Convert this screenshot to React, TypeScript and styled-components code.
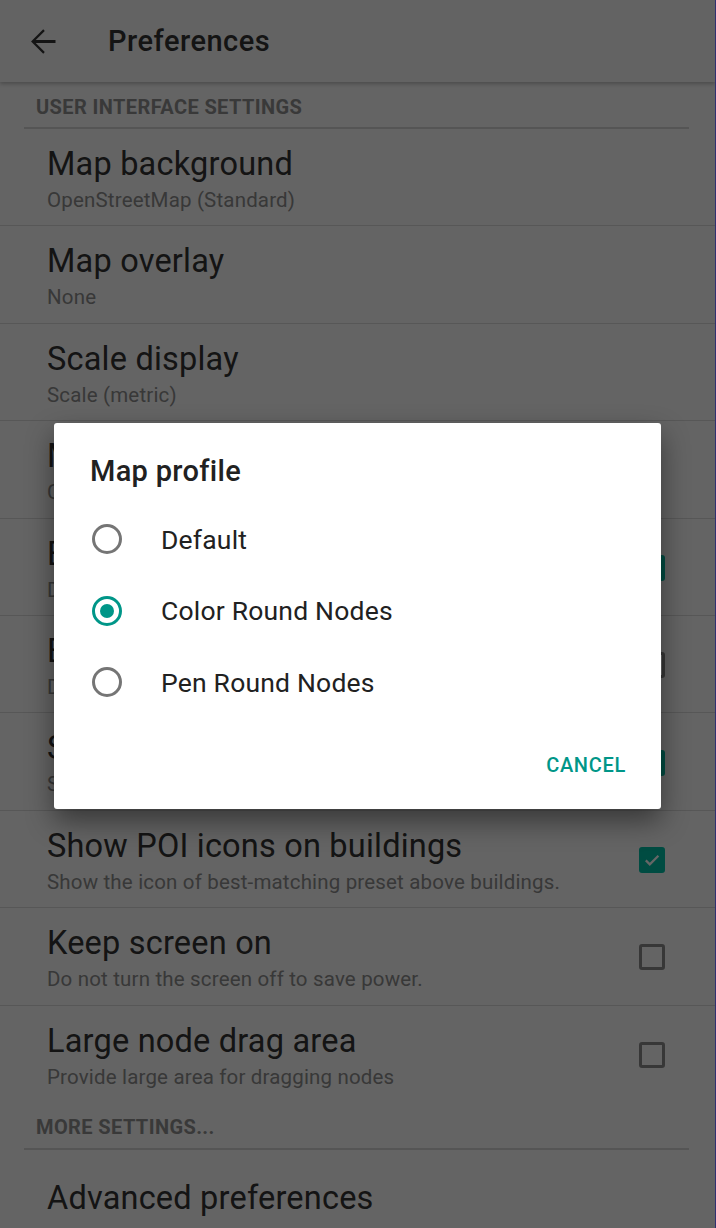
import styled, { createGlobalStyle } from "styled-components";

const GlobalStyle = createGlobalStyle`
  body {
    margin: 0;
    font-family: Roboto, "Noto Sans", "Liberation Sans", sans-serif;
  }
`;

type Pref = {
  title: string;
  summary?: string;
  checked?: boolean;
};

const UI_PREFS: Pref[] = [
  { title: "Map background", summary: "OpenStreetMap (Standard)" },
  { title: "Map overlay", summary: "None" },
  { title: "Scale display", summary: "Scale (metric)" },
  { title: "Map profile", summary: "Color Round Nodes" },
  { title: "Enable anti-aliasing", summary: "Draw smoother lines, may be slower", checked: true },
  { title: "Enable keep right", summary: "Display the keep right overlay", checked: false },
  { title: "Show tolerance", summary: "Show the area around ways and nodes that can be selected", checked: true },
  { title: "Show POI icons on buildings", summary: "Show the icon of best-matching preset above buildings.", checked: true },
  { title: "Keep screen on", summary: "Do not turn the screen off to save power.", checked: false },
  { title: "Large node drag area", summary: "Provide large area for dragging nodes", checked: false },
];

const PROFILES = ["Default", "Color Round Nodes", "Pen Round Nodes"];
const SELECTED_PROFILE = 1;

export default function App() {
  return (
    <>
      <GlobalStyle />
      <Page>
        <AppBar>
          <BackButton>
            <svg width="39" height="39" viewBox="0 0 24 24">
              <path d="M20 11.1H7.83l5.59-5.59L12.45 4.5 4.95 12l7.5 7.5.97-.97L7.83 12.9H20z" fill="#333" />
            </svg>
          </BackButton>
          <AppTitle>Preferences</AppTitle>
        </AppBar>

        <SectionHeader>
          <SectionLabel>User interface settings</SectionLabel>
        </SectionHeader>
        {UI_PREFS.map((pref, index) => (
          <PrefRow key={pref.title} $last={index === UI_PREFS.length - 1}>
            <PrefText>
              <PrefTitle>{pref.title}</PrefTitle>
              {pref.summary && <PrefSummary>{pref.summary}</PrefSummary>}
            </PrefText>
            {pref.checked !== undefined && (
              <Checkbox $checked={pref.checked}>
                {pref.checked && (
                  <svg width="20" height="20" viewBox="0 0 20 20">
                    <path d="M3.8 10.4l4 4 8.6-8.6" stroke="#fff" strokeWidth="2.2" fill="none" />
                  </svg>
                )}
              </Checkbox>
            )}
          </PrefRow>
        ))}

        <SectionHeader>
          <SectionLabel>More settings...</SectionLabel>
        </SectionHeader>
        <PrefRow $last $single>
          <PrefText $single>
            <PrefTitle>Advanced preferences</PrefTitle>
          </PrefText>
        </PrefRow>

        <Scrim>
          <Dialog>
            <DialogTitle>Map profile</DialogTitle>
            <RadioList>
              {PROFILES.map((name, index) => (
                <RadioRow key={name}>
                  <Radio $checked={index === SELECTED_PROFILE} />
                  <RadioLabel>{name}</RadioLabel>
                </RadioRow>
              ))}
            </RadioList>
            <DialogActions>
              <TextButton>Cancel</TextButton>
            </DialogActions>
          </Dialog>
        </Scrim>
      </Page>
    </>
  );
}

const Page = styled.div`
  position: relative;
  width: 716px;
  height: 1228px;
  overflow: hidden;
  background: #fafafa;
  box-sizing: border-box;
  border-right: 1px solid #303070;
`;

const AppBar = styled.div`
  position: relative;
  z-index: 1;
  height: 82px;
  display: flex;
  align-items: center;
  background: #f7f7f7;
  box-shadow: 0 2px 4px rgba(0, 0, 0, 0.25);
`;

const BackButton = styled.div`
  width: 39px;
  height: 39px;
  margin-left: 23px;
  margin-top: 1px;
  display: flex;
`;

const AppTitle = styled.div`
  margin-left: 46px;
  font-size: 29px;
  font-weight: 500;
  letter-spacing: 0.5px;
  color: #333;
`;

const SectionHeader = styled.div`
  margin: 0 26px 0 24px;
  border-bottom: 2px solid #d4d4d4;
`;

const SectionLabel = styled.div`
  height: 45px;
  box-sizing: border-box;
  padding: 4px 0 0 12px;
  display: flex;
  align-items: center;
  font-size: 20px;
  font-weight: 700;
  letter-spacing: 0.4px;
  text-transform: uppercase;
  color: #8e8e8e;
`;

const PrefRow = styled.div<{ $last?: boolean; $single?: boolean }>`
  height: 97.4px;
  box-sizing: border-box;
  display: flex;
  align-items: ${(p) => (p.$single ? "center" : "flex-start")};
  padding: 0 50px 0 47px;
  border-bottom: 1px solid ${(p) => (p.$last ? "transparent" : "#dadada")};
`;

const PrefText = styled.div<{ $single?: boolean }>`
  flex: 1;
  min-width: 0;
  padding-top: ${(p) => (p.$single ? "0" : "15px")};
`;

const PrefTitle = styled.div`
  font-size: 32.5px;
  line-height: 40px;
  letter-spacing: 0.2px;
  color: #333;
  white-space: nowrap;
`;

const PrefSummary = styled.div`
  font-size: 20.5px;
  line-height: 32px;
  letter-spacing: 0.17px;
  color: #8c8c8c;
  white-space: nowrap;
  overflow: hidden;
`;

const Checkbox = styled.div<{ $checked: boolean }>`
  align-self: center;
  width: 26px;
  height: 26px;
  box-sizing: border-box;
  border-radius: 3px;
  display: flex;
  align-items: center;
  justify-content: center;
  margin-top: 2px;
  background: ${(p) => (p.$checked ? "#00bfa5" : "transparent")};
  border: ${(p) => (p.$checked ? "none" : "3px solid #8a8a8a")};
`;

const Scrim = styled.div`
  position: absolute;
  inset: 0;
  z-index: 2;
  background: rgba(0, 0, 0, 0.6);
  display: flex;
  align-items: center;
  justify-content: center;
  padding-top: 4px;
  box-sizing: border-box;
`;

const Dialog = styled.div`
  width: 607px;
  background: #fff;
  border-radius: 3px;
  box-shadow: 0 12px 28px rgba(0, 0, 0, 0.45);
`;

const DialogTitle = styled.div`
  padding: 32px 36px 0;
  font-size: 29px;
  line-height: 32px;
  font-weight: 500;
  letter-spacing: 0.3px;
  color: #212121;
`;

const RadioList = styled.div`
  margin-top: 16px;
`;

const RadioRow = styled.div`
  height: 71.5px;
  display: flex;
  align-items: center;
  padding-left: 38px;
`;

const Radio = styled.div<{ $checked: boolean }>`
  width: 30px;
  height: 30px;
  box-sizing: border-box;
  border-radius: 50%;
  border: 3px solid ${(p) => (p.$checked ? "#009688" : "#757575")};
  display: flex;
  align-items: center;
  justify-content: center;
  &::after {
    content: "";
    width: 14px;
    height: 14px;
    border-radius: 50%;
    background: ${(p) => (p.$checked ? "#009688" : "transparent")};
  }
`;

const RadioLabel = styled.div`
  margin-left: 39px;
  font-size: 26.5px;
  letter-spacing: 0.2px;
  color: #212121;
`;

const DialogActions = styled.div`
  display: flex;
  justify-content: flex-end;
  height: 48px;
  margin-top: 23px;
  padding: 0 35px 20px;
`;

const TextButton = styled.div`
  display: flex;
  align-items: center;
  font-size: 20px;
  font-weight: 500;
  letter-spacing: 0.7px;
  text-transform: uppercase;
  color: #009688;
`;
